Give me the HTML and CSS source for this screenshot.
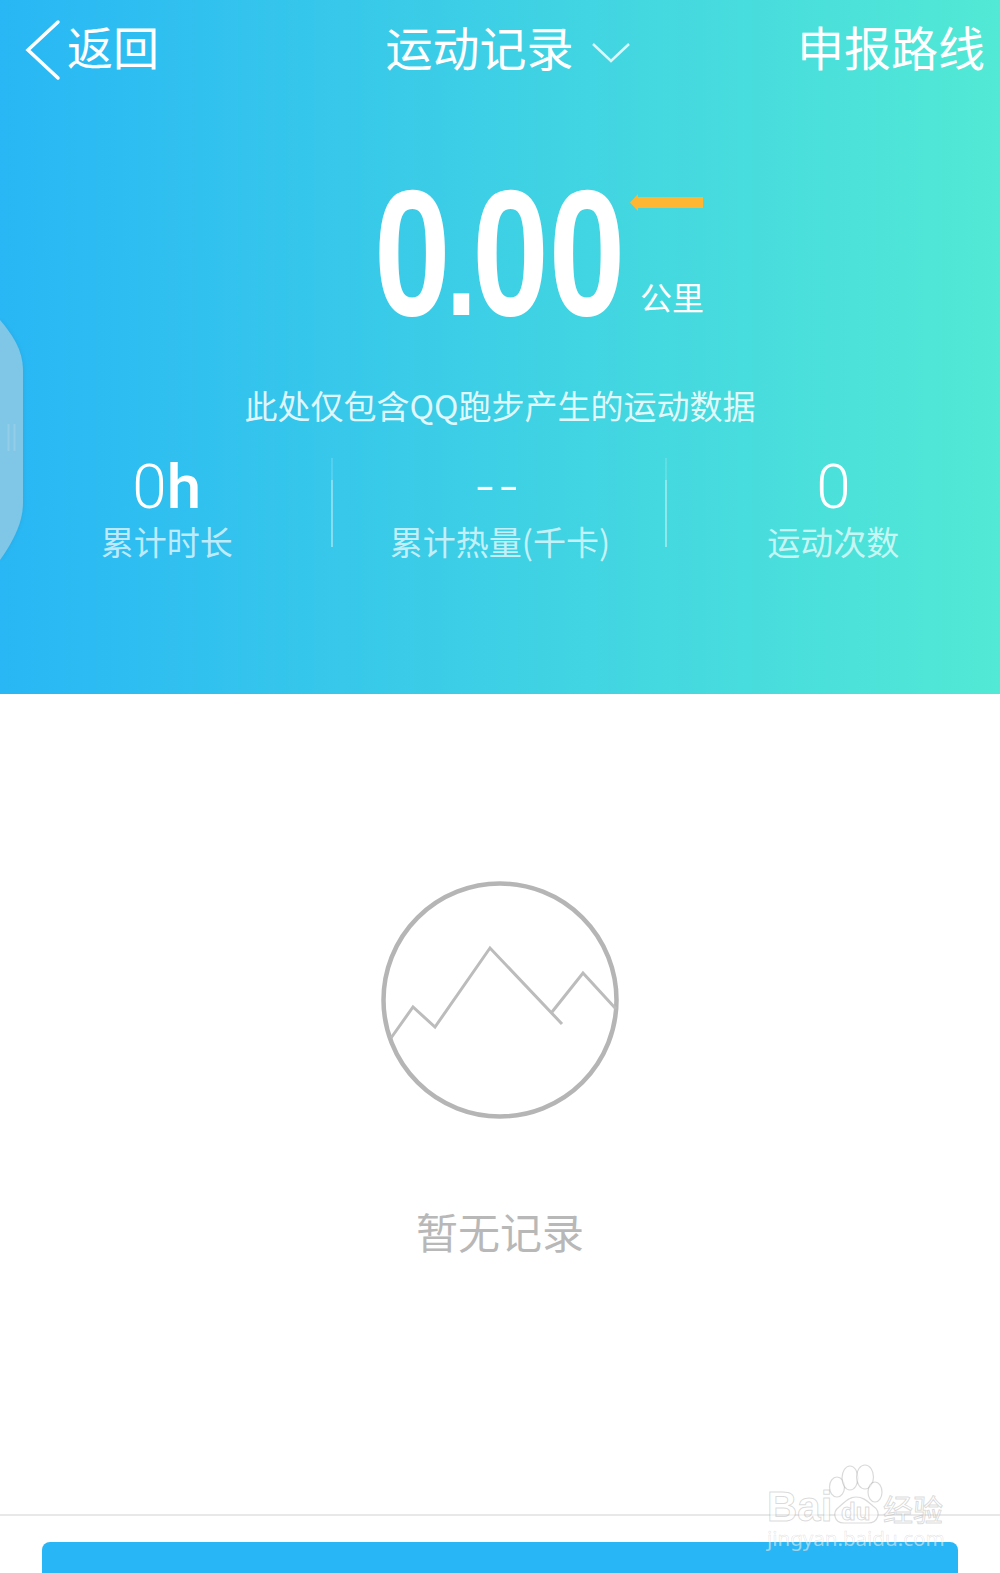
FILE: index.html
```html
<!DOCTYPE html>
<html lang="zh-CN">

<head>
  <meta charset="UTF-8">
  <title>运动记录</title>
  <link rel="stylesheet" href="styles.css">
</head>

<body>
  <div class="page">
    <section class="hero">
      <div class="topbar">
        <div class="back">
          <svg class="back-icon" width="36" height="62" viewBox="0 0 36 62">
            <path d="M33 3 L3 31 L33 59" />
          </svg>
          <span>返回</span>
        </div>
        <div class="title">
          <span>运动记录</span>
          <svg class="title-arrow" width="40" height="22" viewBox="0 0 40 22">
            <path d="M2 2 L20 19 L38 2" />
          </svg>
        </div>
        <div class="report">申报路线</div>
      </div>

      <div class="total">
        <div class="total-num">0<span class="total-dot">.</span>00</div>
        <div class="total-side">
          <svg class="flag" width="73" height="17" viewBox="0 0 73 17">
            <path d="M0 8.5 L8 0 V3 H73 V14 H8 V17 Z" />
          </svg>
          <span class="total-unit">公里</span>
        </div>
      </div>

      <p class="note">此处仅包含QQ跑步产生的运动数据</p>

      <div class="stats">
        <div class="stat">
          <div class="stat-val"><span class="thin">0</span><span class="unit-h">h</span></div>
          <div class="stat-label">累计时长</div>
        </div>
        <div class="stat">
          <div class="stat-val"><span class="thin dashes">--</span></div>
          <div class="stat-label">累计热量(千卡)</div>
        </div>
        <div class="stat">
          <div class="stat-val"><span class="thin">0</span></div>
          <div class="stat-label">运动次数</div>
        </div>
      </div>

      <!-- side drawer handle -->
      <svg class="handle" width="26" height="240" viewBox="0 0 26 240">
        <path class="handle-body" d="M0 0 C12 14 23 30 23 50 V183 C23 205 10 226 0 240 Z" />
        <path class="handle-line" d="M8.5 104 V131 M14.5 104 V131" />
      </svg>
    </section>

    <section class="empty">
      <svg class="empty-icon" width="240" height="240" viewBox="0 0 240 240">
        <circle cx="120" cy="120" r="116.5" />
        <path d="M11 158 L33 127 L55 147 L110 68 L182 144" />
        <path d="M172 132 L203 93 L236 129" />
      </svg>
      <div class="empty-text">暂无记录</div>
    </section>

    <footer class="footer">
      <div class="start-btn"></div>
    </footer>

    <!-- watermark -->
    <div class="mark">
      <span class="mark-word">Bai</span>
      <svg class="mark-paw" width="60" height="64" viewBox="0 0 60 64">
        <ellipse cx="11" cy="23" rx="7.5" ry="10" />
        <ellipse cx="24" cy="14" rx="8" ry="12" />
        <ellipse cx="39" cy="13" rx="8.5" ry="12" />
        <ellipse cx="49" cy="28" rx="7" ry="10" />
        <path d="M30 33 C22 33 18 39 13 43 C6 48 8 59 18 59 C24 59 34 59 42 59 C52 59 56 48 47 42 C42 38 38 33 30 33 Z" />
      </svg>
      <span class="mark-du">du</span>
      <span class="mark-cn">经验</span>
      <span class="mark-url">jingyan.baidu.com</span>
    </div>
  </div>
</body>

</html>
```

FILE: styles.css
```css
* {
  box-sizing: border-box;
}

body {
  margin: 0;
  font-family: "Noto Sans CJK SC", "Noto Sans", sans-serif;
  background: #fff;
}

.page {
  position: relative;
  width: 1000px;
  height: 1573px;
  overflow: hidden;
  display: flex;
  flex-direction: column;
}

.hero {
  position: relative;
  height: 694px;
  flex: none;
  color: #fff;
  background: linear-gradient(90deg, #29b7f5, #52e9d5);
}

.topbar {
  display: grid;
  grid-template-columns: 1fr auto 1fr;
  align-items: center;
  height: 96px;
  padding: 0 15px 6px 25px;
}

.back {
  display: flex;
  align-items: center;
  gap: 6px;
  font-size: 46px;
  line-height: 62px;
}

.back-icon {
  margin-top: 10px;
}

.back-icon path {
  fill: none;
  stroke: #fff;
  stroke-width: 3.5;
  stroke-linecap: round;
}

.title {
  display: flex;
  align-items: center;
  gap: 17px;
  margin-left: 6px;
  font-size: 47px;
}

.title-arrow {
  margin-top: 16px;
}

.title-arrow path {
  fill: none;
  stroke: rgba(255, 255, 255, .8);
  stroke-width: 2.5;
}

.report {
  text-align: right;
  font-size: 47px;
}

.total {
  display: grid;
  grid-template-columns: 1fr 246px 1fr;
  height: 160px;
  margin-top: 77px;
}

.total-num {
  grid-column: 2;
  font-family: "Liberation Sans", sans-serif;
  font-weight: 700;
  font-size: 180px;
  line-height: 160px;
  white-space: nowrap;
  transform: translateX(-3px) scaleX(.765);
  transform-origin: left center;
}

.total-dot {
  margin: 0 -6px;
  font-size: 145px;
}

.total-side {
  grid-column: 3;
  display: flex;
  flex-direction: column;
  align-items: flex-start;
  margin-left: 7px;
  padding-top: 21px;
}

.flag {
  flex: none;
  fill: #ffb733;
}

.total-unit {
  font-size: 32px;
  line-height: 46px;
  margin: 62px 0 0 10px;
}

.note {
  margin: 47px 0 0;
  text-align: center;
  font-size: 33px;
  line-height: 50px;
  color: rgba(255, 255, 255, .85);
}

.stats {
  display: flex;
  margin-top: 26px;
}

.stat {
  position: relative;
  width: 333.33px;
  height: 104px;
  text-align: center;
}

/* faint line plus the brighter lower part */
.stat + .stat::before {
  content: "";
  position: absolute;
  left: -2px;
  top: 2px;
  width: 2px;
  height: 89px;
  background: linear-gradient(rgba(255, 255, 255, .15) 25%, rgba(255, 255, 255, .4) 25%);
}

.stat-val {
  font-family: "Roboto", sans-serif;
  font-size: 62px;
  line-height: 62px;
  height: 62px;
}

.thin {
  font-weight: 300;
}

.dashes {
  letter-spacing: 6px;
}

.unit-h {
  font-weight: 500;
}

.stat-label {
  font-size: 33px;
  line-height: 46px;
  color: rgba(255, 255, 255, .7);
}

.handle {
  position: absolute;
  left: 0;
  top: 320px;
  filter: drop-shadow(0 0 2px rgba(0, 0, 0, .08));
}

.handle-body {
  fill: #80c6e6;
}

.handle-line {
  fill: none;
  stroke: rgba(255, 255, 255, .15);
  stroke-width: 2;
}

.empty {
  flex: 1;
  display: flex;
  flex-direction: column;
  align-items: center;
  padding-top: 186px;
}

.empty-icon {
  fill: none;
  stroke: #bcbcbc;
  stroke-width: 3;
}

.empty-icon circle {
  stroke: #b5b5b5;
  stroke-width: 4.5;
}

.empty-text {
  margin-top: 80px;
  font-size: 42px;
  line-height: 62px;
  color: #b8b8b8;
}

.footer {
  flex: none;
  height: 59px;
  border-top: 2px solid #e8e8e8;
  padding: 26px 42px 0;
}

.start-btn {
  height: 60px;
  background: #29b6f6;
  border-radius: 8px;
}

.mark {
  position: absolute;
  left: 0;
  top: 0;
  width: 1000px;
  height: 1573px;
  pointer-events: none;
  color: rgba(255, 255, 255, .55);
}

.mark-word,
.mark-cn,
.mark-du,
.mark-url {
  position: absolute;
  white-space: nowrap;
  -webkit-text-stroke: 1px rgba(150, 150, 150, .35);
}

.mark-word,
.mark-du {
  font-family: "Liberation Sans", sans-serif;
  font-weight: 700;
}

.mark-word {
  left: 767px;
  top: 1489px;
  font-size: 42px;
  line-height: 36px;
}

.mark-paw {
  position: absolute;
  left: 826px;
  top: 1464px;
  fill: rgba(255, 255, 255, .55);
  stroke: rgba(150, 150, 150, .35);
  stroke-width: 1.2;
}

.mark-du {
  left: 841px;
  top: 1498px;
  font-size: 24px;
  line-height: 28px;
}

.mark-cn {
  left: 883px;
  top: 1490px;
  font-size: 30px;
  line-height: 36px;
}

.mark-url {
  left: 767px;
  top: 1526px;
  font-family: "Noto Sans", sans-serif;
  font-size: 20.5px;
  line-height: 24px;
  -webkit-text-stroke: .5px rgba(150, 150, 150, .3);
}
```
